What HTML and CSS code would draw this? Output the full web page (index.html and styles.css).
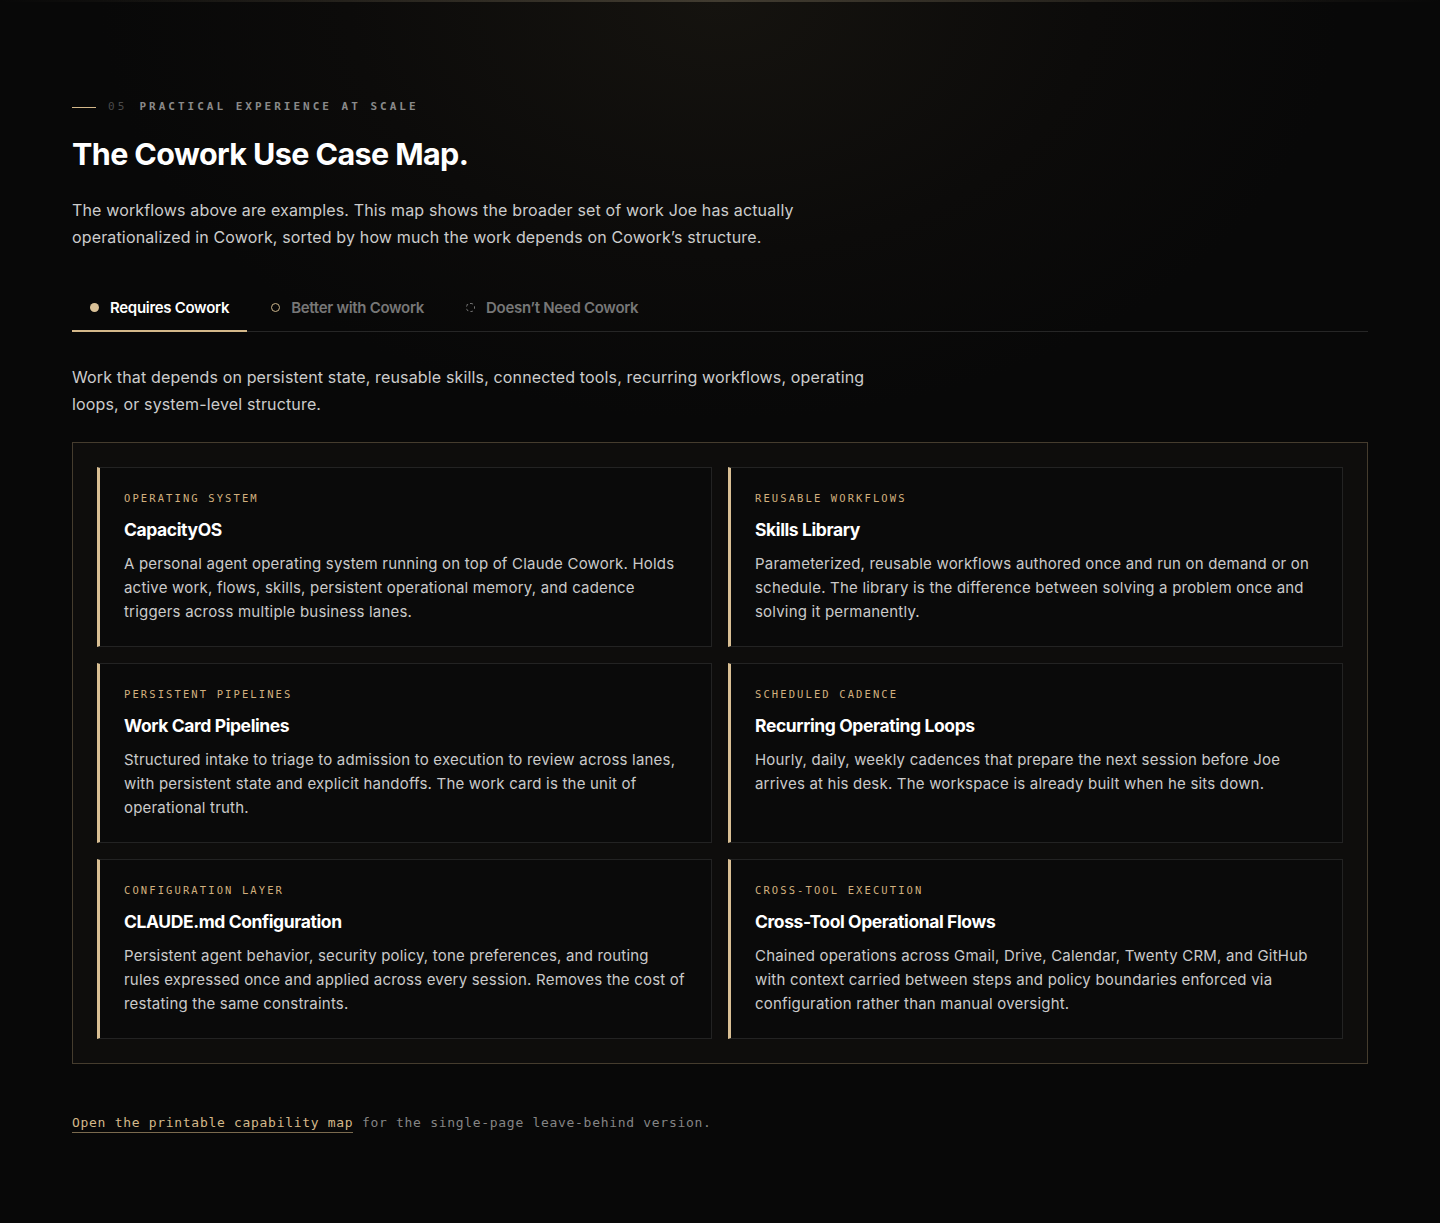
FILE: index.html
```html
<!DOCTYPE html>
<html lang="en">
<head>
    <meta charset="UTF-8">
    <meta name="viewport" content="width=device-width, initial-scale=1.0">
    <title>The Cowork Use Case Map</title>
    <link rel="stylesheet" href="styles.css">
</head>
<body>
    <section class="usecases">
        <div class="eyebrow">
            <span class="eyebrow-line"></span>
            <span class="eyebrow-num">05</span>
            <span class="eyebrow-label">PRACTICAL EXPERIENCE AT SCALE</span>
        </div>
        <h2 class="title">The Cowork Use Case Map.</h2>
        <p class="intro">The workflows above are examples. This map shows the broader set of work Joe has actually operationalized in Cowork, sorted by how much the work depends on Cowork’s structure.</p>

        <div class="tabs">
            <button class="tab active"><span class="dot dot-fill"></span>Requires Cowork</button>
            <button class="tab"><span class="dot dot-ring"></span>Better with Cowork</button>
            <button class="tab"><span class="dot dot-dash"></span>Doesn’t Need Cowork</button>
        </div>

        <p class="tab-desc">Work that depends on persistent state, reusable skills, connected tools, recurring workflows, operating loops, or system-level structure.</p>

        <div class="panel">
            <div class="card">
                <div class="card-label">OPERATING SYSTEM</div>
                <h3 class="card-title">CapacityOS</h3>
                <p class="card-text">A personal agent operating system running on top of Claude Cowork. Holds active work, flows, skills, persistent operational memory, and cadence triggers across multiple business lanes.</p>
            </div>
            <div class="card">
                <div class="card-label">REUSABLE WORKFLOWS</div>
                <h3 class="card-title">Skills Library</h3>
                <p class="card-text">Parameterized, reusable workflows authored once and run on demand or on schedule. The library is the difference between solving a problem once and solving it permanently.</p>
            </div>
            <div class="card">
                <div class="card-label">PERSISTENT PIPELINES</div>
                <h3 class="card-title">Work Card Pipelines</h3>
                <p class="card-text">Structured intake to triage to admission to execution to review across lanes, with persistent state and explicit handoffs. The work card is the unit of operational truth.</p>
            </div>
            <div class="card">
                <div class="card-label">SCHEDULED CADENCE</div>
                <h3 class="card-title">Recurring Operating Loops</h3>
                <p class="card-text">Hourly, daily, weekly cadences that prepare the next session before Joe arrives at his desk. The workspace is already built when he sits down.</p>
            </div>
            <div class="card">
                <div class="card-label">CONFIGURATION LAYER</div>
                <h3 class="card-title">CLAUDE.md Configuration</h3>
                <p class="card-text">Persistent agent behavior, security policy, tone preferences, and routing rules expressed once and applied across every session. Removes the cost of restating the same constraints.</p>
            </div>
            <div class="card">
                <div class="card-label">CROSS-TOOL EXECUTION</div>
                <h3 class="card-title">Cross-Tool Operational Flows</h3>
                <p class="card-text">Chained operations across Gmail, Drive, Calendar, Twenty CRM, and GitHub with context carried between steps and policy boundaries enforced via configuration rather than manual oversight.</p>
            </div>
        </div>

        <p class="footnote"><a href="#" class="footnote-link">Open the printable capability map</a> for the single-page leave-behind version.</p>
    </section>
</body>
</html>
```

FILE: styles.css
```css
* {
    box-sizing: border-box;
}

html {
    background-color: #080808;
}

body {
    margin: 0;
    min-height: 1223px;
    font-family: Inter, "Noto Sans", sans-serif;
    color: #e8e8e8;
    background:
        linear-gradient(90deg, rgba(60, 55, 45, 0) 0%, rgba(70, 64, 52, 0.9) 50%, rgba(60, 55, 45, 0) 100%) top / 100% 2px no-repeat,
        radial-gradient(ellipse 620px 420px at 50% 0%, #15130f 0%, #0c0b0a 60%, #080808 100%) top / 100% 600px no-repeat,
        #080808;
}

.usecases {
    padding: 100px 72px 90px;
}

.eyebrow {
    display: flex;
    align-items: center;
    font-family: "DejaVu Sans Mono", "Liberation Mono", monospace;
    font-size: 11px;
    letter-spacing: 3.1px;
    line-height: 14px;
}

.eyebrow-line {
    width: 24px;
    height: 1px;
    background-color: #d4b88a;
    margin-right: 12px;
}

.eyebrow-num {
    color: #4a4a4a;
    margin-right: 12px;
}

.eyebrow-label {
    color: #8a8a8a;
    font-weight: bold;
    letter-spacing: 3px;
}

.title {
    margin: 20px 0 0;
    font-size: 30.5px;
    font-weight: 700;
    letter-spacing: -0.6px;
    line-height: 40px;
    color: #ffffff;
}

.intro {
    margin: 23px 0 0;
    max-width: 730px;
    font-size: 16px;
    line-height: 27px;
    color: #cccccc;
    letter-spacing: 0.15px;
}

.tabs {
    display: flex;
    margin-top: 39px;
    border-bottom: 1px solid #262626;
}

.tab {
    display: flex;
    align-items: center;
    gap: 11px;
    padding: 8px 18px 13px;
    margin-right: 6px;
    background: none;
    border: none;
    border-bottom: 2px solid transparent;
    margin-bottom: -1px;
    font-family: Inter, "Noto Sans", sans-serif;
    font-size: 15px;
    font-weight: 600;
    letter-spacing: -0.3px;
    color: #777777;
    cursor: pointer;
}

.tab.active {
    color: #ffffff;
    border-bottom-color: #d4b88a;
}

.dot {
    width: 9px;
    height: 9px;
    border-radius: 50%;
}

.dot-fill {
    background-color: #d9c197;
}

.dot-ring {
    border: 1.5px solid #c9b38a;
}

.dot-dash {
    border: 1.5px dashed #7a7a7a;
}

.tab-desc {
    margin: 32px 0 0;
    max-width: 820px;
    font-size: 16px;
    line-height: 27px;
    color: #cccccc;
    letter-spacing: 0.15px;
}

.panel {
    margin-top: 24px;
    padding: 24px;
    border: 1px solid #453c2e;
    background-color: #0e0d0c;
    display: grid;
    grid-template-columns: 1fr 1fr;
    gap: 16px 16px;
}

.card {
    min-height: 180px;
    padding: 23px 26px 21px 24px;
    background-color: #0a0a0a;
    border: 1px solid #232323;
    border-left: 3px solid #d9bf94;
}

.card-label {
    font-family: "DejaVu Sans Mono", "Liberation Mono", monospace;
    font-size: 10.5px;
    letter-spacing: 2.1px;
    line-height: 14px;
    color: #d2b07e;
}

.card-title {
    margin: 13px 0 0;
    font-size: 17.5px;
    font-weight: 700;
    letter-spacing: -0.4px;
    line-height: 24px;
    color: #ffffff;
}

.card-text {
    margin: 10px 0 0;
    font-size: 15px;
    line-height: 24px;
    color: #cacaca;
    letter-spacing: 0.2px;
}

.footnote {
    margin: 51px 0 0;
    font-family: "DejaVu Sans Mono", "Liberation Mono", monospace;
    font-size: 13px;
    color: #858585;
    letter-spacing: 0.7px;
}

.footnote-link {
    color: #d4b88a;
    text-decoration: none;
    border-bottom: 1px solid #7a6a4e;
    padding-bottom: 2px;
}
```
